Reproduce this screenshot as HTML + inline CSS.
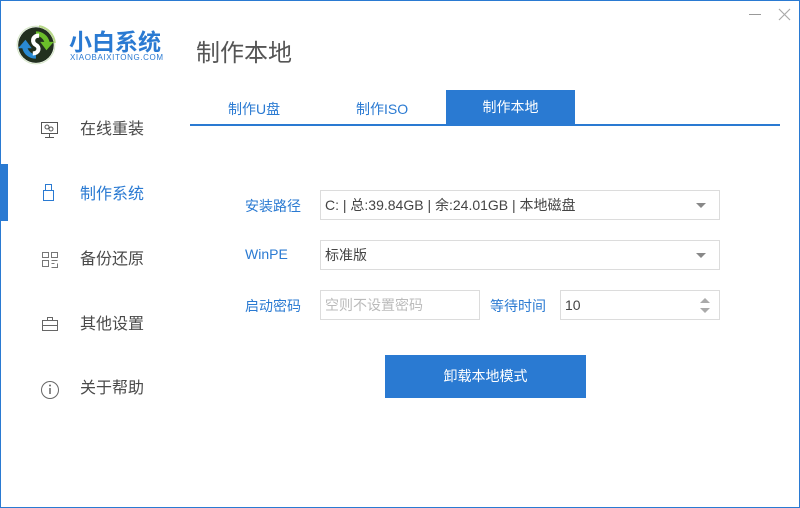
<!DOCTYPE html>
<html><head><meta charset="utf-8"><style>
*{margin:0;padding:0;box-sizing:border-box}
body{width:800px;height:508px;overflow:hidden;background:#fff;font-family:"Liberation Sans","Noto Sans CJK SC",sans-serif;position:relative}
.frame{position:absolute;inset:0;border:1px solid #2a7ad2}
.a{position:absolute;white-space:nowrap}
.nav{font-size:16px;color:#4a4a4a;line-height:20px}
.lbl{font-size:14px;color:#2a7ad2}
.box{position:absolute;border:1px solid #dcdcdc;background:#fff;font-size:14px;color:#444;padding-left:4px;display:flex;align-items:center}
.tri{position:absolute;right:13px;top:12px;width:0;height:0;border-left:5px solid transparent;border-right:5px solid transparent;border-top:5px solid #888}
</style></head><body>
<div class="frame"></div>
<!-- logo -->
<svg class="a" style="left:16px;top:22px" width="42" height="44" viewBox="0 0 40 42">
<circle cx="19" cy="22" r="17" fill="#22301f"/>
<circle cx="19" cy="22" r="18" fill="none" stroke="#d5e6c8" stroke-width="1"/>
<path d="M22 4 A18 18 0 0 1 37 20" stroke="#b8d88a" stroke-width="2" fill="none"/>
<path d="M19 9 A13 13 0 0 1 32 19 L36 19 L29 27 L23 19 L27 19 A9 9 0 0 0 19 13Z" fill="#6bbf2a"/>
<path d="M19 35 A13 13 0 0 1 6 25 L2 25 L9 17 L15 25 L11 25 A9 9 0 0 0 19 31Z" fill="#2a8ad2"/>
<path d="M22 13 C15 13 15 20 19 22 C23 24 22 30 16 30" stroke="#fff" stroke-width="4" fill="none"/>
</svg>
<div class="a" style="left:69px;top:28px;font-size:23px;line-height:28px;font-weight:bold;color:#2a7ad2">小白系统</div>
<div class="a" style="left:70px;top:54px;font-size:8px;line-height:8px;color:#2a7ad2;letter-spacing:0.6px">XIAOBAIXITONG.COM</div>
<div class="a" style="left:196px;top:38px;font-size:24px;line-height:32px;color:#555">制作本地</div>
<!-- window controls -->
<div class="a" style="left:749px;top:14px;width:12px;height:1px;background:#999"></div>
<svg class="a" style="left:778px;top:8px" width="13" height="13"><path d="M1 1L12 12M12 1L1 12" stroke="#aaa" stroke-width="1.2"/></svg>
<!-- sidebar -->
<div class="a" style="left:0;top:164px;width:8px;height:57px;background:#2a7ad2"></div>
<svg class="a" style="left:40px;top:121px" width="20" height="18"><rect x="1.5" y="1.5" width="16" height="11" fill="none" stroke="#555"/><circle cx="7" cy="6" r="2" fill="none" stroke="#555"/><circle cx="11" cy="8" r="2" fill="none" stroke="#555"/><path d="M9.5 13v3M5 16.5h9" stroke="#555"/></svg>
<div class="a nav" style="left:80px;top:120px">在线重装</div>
<svg class="a" style="left:42px;top:183px" width="14" height="20"><rect x="3.5" y="1.5" width="6" height="6" fill="none" stroke="#2a7ad2"/><rect x="1.5" y="7.5" width="10" height="10" fill="none" stroke="#2a7ad2"/></svg>
<div class="a nav" style="left:80px;top:185px;color:#2a7ad2">制作系统</div>
<svg class="a" style="left:41px;top:251px" width="18" height="18"><path d="M1.5 1.5h6v5h-6zM10.5 1.5h6v5h-6zM1.5 9.5h6v6h-6zM10.5 9.5h6M10.5 12.5h3M16.5 12.5v4h-6" fill="none" stroke="#777"/></svg>
<div class="a nav" style="left:80px;top:250px">备份还原</div>
<svg class="a" style="left:41px;top:316px" width="18" height="16"><rect x="1.5" y="4.5" width="15" height="10" fill="none" stroke="#666"/><path d="M6.5 4.5v-3h5v3M1.5 9.5h15" fill="none" stroke="#666"/></svg>
<div class="a nav" style="left:80px;top:315px">其他设置</div>
<svg class="a" style="left:40px;top:380px" width="20" height="20"><circle cx="10" cy="10" r="8.5" fill="none" stroke="#666"/><path d="M10 8v6" stroke="#666" stroke-width="1.5"/><circle cx="10" cy="5.5" r="1" fill="#666"/></svg>
<div class="a nav" style="left:80px;top:379px">关于帮助</div>
<!-- tabs -->
<div class="a" style="left:190px;top:124px;width:590px;height:2px;background:#2a7ad2"></div>
<div class="a" style="left:228px;top:99px;font-size:14px;color:#2a7ad2">制作U盘</div>
<div class="a" style="left:356px;top:99px;font-size:14px;color:#2a7ad2">制作ISO</div>
<div class="a" style="left:446px;top:90px;width:129px;height:35px;background:#2a7ad2;color:#fff;font-size:14px;text-align:center;line-height:34px">制作本地</div>
<!-- form -->
<div class="a lbl" style="left:245px;top:196px">安装路径</div>
<div class="box" style="left:320px;top:190px;width:400px;height:30px">C: | 总:39.84GB | 余:24.01GB | 本地磁盘<div class="tri"></div></div>
<div class="a lbl" style="left:245px;top:246px">WinPE</div>
<div class="box" style="left:320px;top:240px;width:400px;height:30px">标准版<div class="tri"></div></div>
<div class="a lbl" style="left:245px;top:296px">启动密码</div>
<div class="box" style="left:320px;top:290px;width:160px;height:30px;color:#bbb">空则不设置密码</div>
<div class="a lbl" style="left:490px;top:296px">等待时间</div>
<div class="box" style="left:560px;top:290px;width:160px;height:30px">10
<div style="position:absolute;right:9px;top:7px;border-left:5px solid transparent;border-right:5px solid transparent;border-bottom:5px solid #aaa"></div>
<div style="position:absolute;right:9px;top:17px;border-left:5px solid transparent;border-right:5px solid transparent;border-top:5px solid #aaa"></div></div>
<div class="a" style="left:385px;top:355px;width:201px;height:43px;background:#2a7ad2;color:#fff;font-size:14px;text-align:center;line-height:43px">卸载本地模式</div>
</body></html>
